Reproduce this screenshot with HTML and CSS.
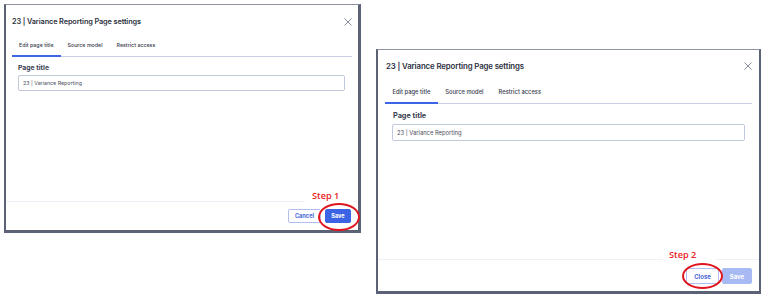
FILE: index.html
```html
<!DOCTYPE html>
<html lang="en">
<head>
    <meta charset="UTF-8">
    <meta name="viewport" content="width=device-width, initial-scale=1.0">
    <title>Page settings steps</title>
    <link rel="stylesheet" href="styles.css">
</head>
<body>
    <div class="canvas">
        <!-- step 1: before saving -->
        <div class="dialog small">
            <div class="dialog-head">
                <span class="dialog-title">23 | Variance Reporting Page settings</span>
                <svg class="close-x" viewBox="0 0 8 8"><path d="M0.5 0.5L7.5 7.5M7.5 0.5L0.5 7.5"/></svg>
            </div>
            <div class="tabs">
                <span class="tab active">Edit page title</span>
                <span class="tab">Source model</span>
                <span class="tab">Restrict access</span>
            </div>
            <div class="dialog-body">
                <label class="field-label">Page title</label>
                <div class="field">23 | Variance Reporting</div>
            </div>
            <div class="dialog-foot">
                <button class="btn btn-outline">Cancel</button>
                <button class="btn btn-primary">Save</button>
            </div>
            <span class="step-note">Step 1</span>
            <span class="step-ring"></span>
        </div>

        <!-- step 2: after saving -->
        <div class="dialog large">
            <div class="dialog-head">
                <span class="dialog-title">23 | Variance Reporting Page settings</span>
                <svg class="close-x" viewBox="0 0 8 8"><path d="M0.5 0.5L7.5 7.5M7.5 0.5L0.5 7.5"/></svg>
            </div>
            <div class="tabs">
                <span class="tab active">Edit page title</span>
                <span class="tab">Source model</span>
                <span class="tab">Restrict access</span>
            </div>
            <div class="dialog-body">
                <label class="field-label">Page title</label>
                <div class="field">23 | Variance Reporting</div>
            </div>
            <div class="dialog-foot">
                <button class="btn btn-outline">Close</button>
                <button class="btn btn-disabled">Save</button>
            </div>
            <span class="step-note">Step 2</span>
            <span class="step-ring"></span>
        </div>
    </div>
</body>
</html>
```

FILE: styles.css
```css
body { margin: 0; background: #ffffff; font-family: Inter, "Noto Sans", sans-serif; color: #2c3042; }
.canvas { display: flex; align-items: flex-start; width: 769px; height: 300px; }

.dialog { position: relative; display: flex; flex-direction: column; background: #fff; border-style: solid; border-color: #5b6276; border-top-color: #8d93a5; box-sizing: border-box; }
.dialog.small { margin: 4px 0 0 4px; width: 357px; height: 229px; border-width: 1px 3px 3px 2px; }
.dialog.large { margin: 49px 0 0 15px; width: 385px; height: 245px; border-width: 1px 2px 3px 2px; }

.dialog-head { display: flex; align-items: center; justify-content: space-between; }
.dialog-title { font-weight: 600; color: #2b2f40; white-space: nowrap; letter-spacing: -0.1px; }
.close-x { width: 8px; height: 8px; stroke: #7b8092; stroke-width: 0.9; fill: none; }

.tabs { display: flex; border-bottom: 1px solid #c8cde3; }
.tab { font-weight: 500; color: #373b4e; border-bottom: 2px solid transparent; margin-bottom: -1px; white-space: nowrap; }
.tab.active { border-bottom-color: #3d66e6; }

.dialog-body { flex: 1; display: flex; flex-direction: column; align-items: stretch; }
.field-label { font-weight: 700; color: #3a3e50; }
.field { border: 1px solid #c3c9dc; border-radius: 2px; box-sizing: border-box; color: #4a4d5c; display: flex; align-items: center; }

.dialog-foot { display: flex; justify-content: flex-end; align-items: flex-start; border-top: 1px solid #eef0f8; }
.btn { font-family: Inter, sans-serif; font-weight: 700; border-radius: 2px; box-sizing: border-box; padding: 0; }
.btn-outline { background: #fff; color: #4866d8; border: 1px solid #b2bfee; }
.btn-primary { background: #3b63e4; color: #fff; border: 1px solid #3b63e4; }
.btn-disabled { background: #a8baf4; color: #fff; border: 1px solid #a8baf4; }

.step-note { position: absolute; background: #fff; color: #ec1c24; font-family: "Open Sans", "DejaVu Sans", sans-serif; font-weight: 600; font-size: 9.2px; line-height: 12px; }
.step-ring { position: absolute; border: 2px solid #e0161f; border-radius: 50%; box-sizing: border-box; }

/* step 1 dialog sizes */
.small .dialog-head { padding: 11px 6px 0 6px; line-height: 12px; }
.small .dialog-title { font-size: 7.3px; }
.small .tabs { margin: 0 6px; }
.small .tab { padding: 13px 7px 5px; font-size: 5.3px; line-height: 9px; }
.small .dialog-body { padding: 6px 13px 0 12px; }
.small .field-label { font-size: 6.8px; line-height: 10px; margin-bottom: 2px; }
.small .field { height: 16px; padding-left: 4px; font-size: 5.3px; }
.small .dialog-foot { padding: 7px 7px 0 0; height: 29px; box-sizing: border-box; }
.small .btn { height: 14px; font-size: 5.6px; }
.small .btn-outline { width: 33px; margin-right: 4px; }
.small .btn-primary { width: 26px; }
.small .step-note { left: 299px; top: 185px; padding: 0 14px 0 7px; }
.small .step-ring { left: 312px; top: 198px; width: 42px; height: 28px; }

/* step 2 dialog sizes */
.large .dialog-head { padding: 10px 7px 0 8px; line-height: 12px; }
.large .dialog-title { font-size: 7.8px; }
.large .tabs { margin: 0 7px; }
.large .tab { padding: 15px 7.5px 5px; font-size: 5.8px; line-height: 10px; }
.large .dialog-body { padding: 6px 14px 0 14px; }
.large .field-label { font-size: 7.3px; line-height: 11px; margin-bottom: 3px; padding-left: 1px; }
.large .field { height: 17px; padding-left: 4px; font-size: 5.8px; }
.large .dialog-foot { padding: 8px 7px 0 0; height: 32px; box-sizing: border-box; }
.large .btn { height: 16px; font-size: 6px; }
.large .btn-outline { width: 33px; margin-right: 3px; }
.large .btn-disabled { width: 30px; }
.large .step-note { left: 285px; top: 199px; padding: 0 20px 0 6px; }
.large .step-ring { left: 304px; top: 213px; width: 41px; height: 26px; }
```
